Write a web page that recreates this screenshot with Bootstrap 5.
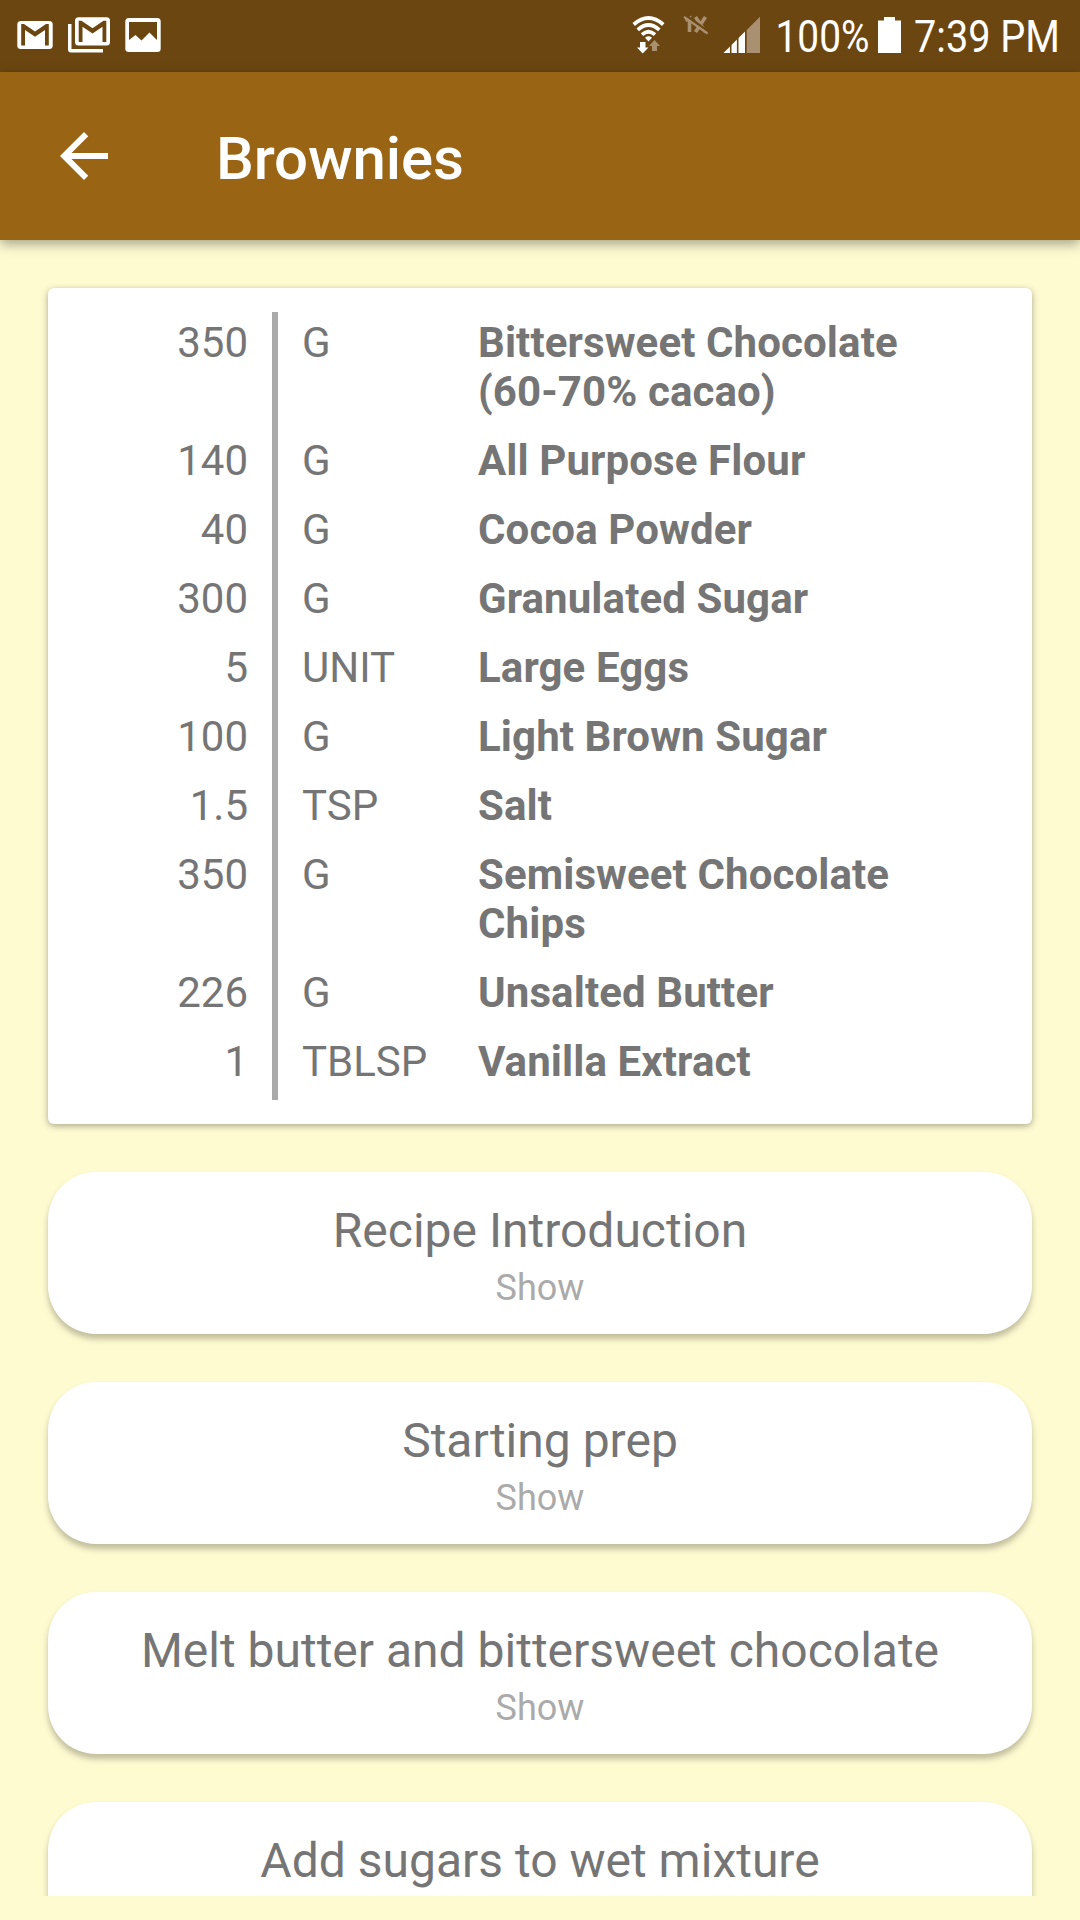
<!DOCTYPE html>
<html lang="en">
<head>
<meta charset="utf-8">
<meta name="viewport" content="width=device-width, initial-scale=1">
<title>Brownies</title>
<link href="https://cdn.jsdelivr.net/npm/bootstrap@5.3.0/dist/css/bootstrap.min.css" rel="stylesheet">
<style>
body{font-family:Roboto,"Liberation Sans",sans-serif;background:#fffbd1;color:#757575}
.screen{height:1920px;padding-bottom:24px}
.status-bar{height:72px;background:#6b4610}
.status-bar svg{width:1080px;height:72px}
.app-bar{height:168px;background:#996414;box-shadow:0 4px 12px rgba(0,0,0,.36);padding-left:60px;z-index:1}
.app-bar svg{width:48px;height:48px}
.app-title{font-size:60px;font-weight:500;line-height:70px;letter-spacing:-.12px;margin-left:108px;padding-top:5px;color:#fff}
.content-area{padding:48px 48px 0;gap:48px}
.ingredients{--bs-card-border-width:0;border-radius:6px;padding:24px 0;box-shadow:0 2px 7px rgba(0,0,0,.34);font-size:42px;line-height:49px}
.qty,.unit,.ing-name{padding-top:6px;padding-bottom:14px}
.qty{width:230px;padding-right:24px;border-right:6px solid #aaa}
.unit{width:200px;padding-left:24px}
.ing-name{width:480px;letter-spacing:.1px}
.step-card{--bs-card-border-width:0;height:162px;border-radius:48px;padding-top:31px;box-shadow:0 5px 6px rgba(0,0,0,.25)}
.step-title{font-size:48px;line-height:56px}
.step-toggle{font-size:36px;line-height:42px;margin-top:8px;color:#aaa}
</style>
</head>
<body>
<div class="screen d-flex flex-column overflow-hidden">
  <div class="status-bar flex-shrink-0">
    <svg class="d-block" viewBox="0 0 1080 72" fill="#fff" font-family="Roboto,sans-serif">
      <!-- mail -->
      <rect x="17.3" y="21" width="35.4" height="28" rx="3.5"/>
      <path d="M21.200 24H24L35 31.500 46 24h2.800V45.500H45V30L35 36.700 25 30V45.500H21.200z" fill="#6b4610"/>
      <!-- stacked mail -->
      <path d="M68 24h3.500v25H103v3.500H71q-3 0-3-3z"/>
      <rect x="75" y="17.200" width="35" height="28.300" rx="3.500"/>
      <path d="M78.700 20.700H81.500L92.500 28.200 103.500 20.700h2.800V42H102.500V26.700L92.500 33.400 82.500 26.700V42H78.700z" fill="#6b4610"/>
      <!-- picture -->
      <rect x="125.300" y="18" width="35.400" height="34" rx="3.500"/>
      <path d="M129 22h28v18l-7.500-7.500-8 8-6-5.500-6.500 5z" fill="#6b4610"/>
      <!-- wifi and traffic arrows -->
      <g fill="none" stroke="#fff" stroke-width="3.700">
        <path d="M633.700 24.500Q648.500 11.500 663.300 24.500"/>
        <path d="M637.700 29.800Q648.500 20.200 659.300 29.800"/>
        <path d="M642 34.700Q648.500 28.800 655 34.700"/>
      </g>
      <path d="M645 37.700Q648.500 35 652 37.700L648.500 41.500z"/>
      <path d="M640 42h5.500v5.500h3L642.700 53.500 637 47.500h3z"/>
      <path d="M654.500 40l5.500 6h-3v5h-5v-5h-3z" fill="#a89070"/>
      <!-- 1x off -->
      <g fill="none" stroke="#a89070" stroke-width="3.600">
        <path d="M685.500 20.500L689.500 18.500V32M695.500 17L705.500 32M705.500 17L695.500 32"/>
        <path d="M686 15.500L709 32" stroke="#6b4610" stroke-width="2.500"/>
        <path d="M684 16.800L707.500 33.500" stroke-width="2.200"/>
      </g>
      <!-- signal -->
      <path d="M723.500 53L745 31.500V53z"/>
      <path d="M746.700 53V30L760 16.700V53z" fill="#a89070"/>
      <path d="M730.700 42v11M737.700 35v18" stroke="#6b4610" stroke-width="1.600"/>
      <text x="775.500" y="52" font-size="45" textLength="94" lengthAdjust="spacingAndGlyphs">100%</text>
      <path d="M884 17h11v3.500h6V53h-23V20.500h6z"/>
      <text x="914" y="52" font-size="45" textLength="146" lengthAdjust="spacingAndGlyphs">7:39 PM</text>
    </svg>
  </div>
  <nav class="app-bar d-flex align-items-center flex-shrink-0 position-relative">
    <svg viewBox="0 0 16 16" fill="#fff"><path d="M16 7H3.830l5.590-5.590L8 0 0 8l8 8 1.410-1.410L3.830 9H16z"/></svg>
    <h1 class="app-title mb-0">Brownies</h1>
  </nav>
  <main class="content-area d-flex flex-column overflow-hidden flex-grow-1">
    <section class="card ingredients flex-shrink-0">
      <div class="d-flex"><div class="qty text-end">350</div><div class="unit">G</div><div class="ing-name fw-bold">Bittersweet Chocolate (60-70% cacao)</div></div>
      <div class="d-flex"><div class="qty text-end">140</div><div class="unit">G</div><div class="ing-name fw-bold">All Purpose Flour</div></div>
      <div class="d-flex"><div class="qty text-end">40</div><div class="unit">G</div><div class="ing-name fw-bold">Cocoa Powder</div></div>
      <div class="d-flex"><div class="qty text-end">300</div><div class="unit">G</div><div class="ing-name fw-bold">Granulated Sugar</div></div>
      <div class="d-flex"><div class="qty text-end">5</div><div class="unit">UNIT</div><div class="ing-name fw-bold">Large Eggs</div></div>
      <div class="d-flex"><div class="qty text-end">100</div><div class="unit">G</div><div class="ing-name fw-bold">Light Brown Sugar</div></div>
      <div class="d-flex"><div class="qty text-end">1.5</div><div class="unit">TSP</div><div class="ing-name fw-bold">Salt</div></div>
      <div class="d-flex"><div class="qty text-end">350</div><div class="unit">G</div><div class="ing-name fw-bold">Semisweet Chocolate Chips</div></div>
      <div class="d-flex"><div class="qty text-end">226</div><div class="unit">G</div><div class="ing-name fw-bold">Unsalted Butter</div></div>
      <div class="d-flex"><div class="qty text-end">1</div><div class="unit">TBLSP</div><div class="ing-name fw-bold">Vanilla Extract</div></div>
    </section>
    <section class="card step-card text-center flex-shrink-0"><div class="step-title">Recipe Introduction</div><div class="step-toggle">Show</div></section>
    <section class="card step-card text-center flex-shrink-0"><div class="step-title">Starting prep</div><div class="step-toggle">Show</div></section>
    <section class="card step-card text-center flex-shrink-0"><div class="step-title">Melt butter and bittersweet chocolate</div><div class="step-toggle">Show</div></section>
    <section class="card step-card text-center flex-shrink-0"><div class="step-title">Add sugars to wet mixture</div></section>
  </main>
</div>
<script src="https://cdn.jsdelivr.net/npm/bootstrap@5.3.0/dist/js/bootstrap.bundle.min.js"></script>
</body>
</html>
